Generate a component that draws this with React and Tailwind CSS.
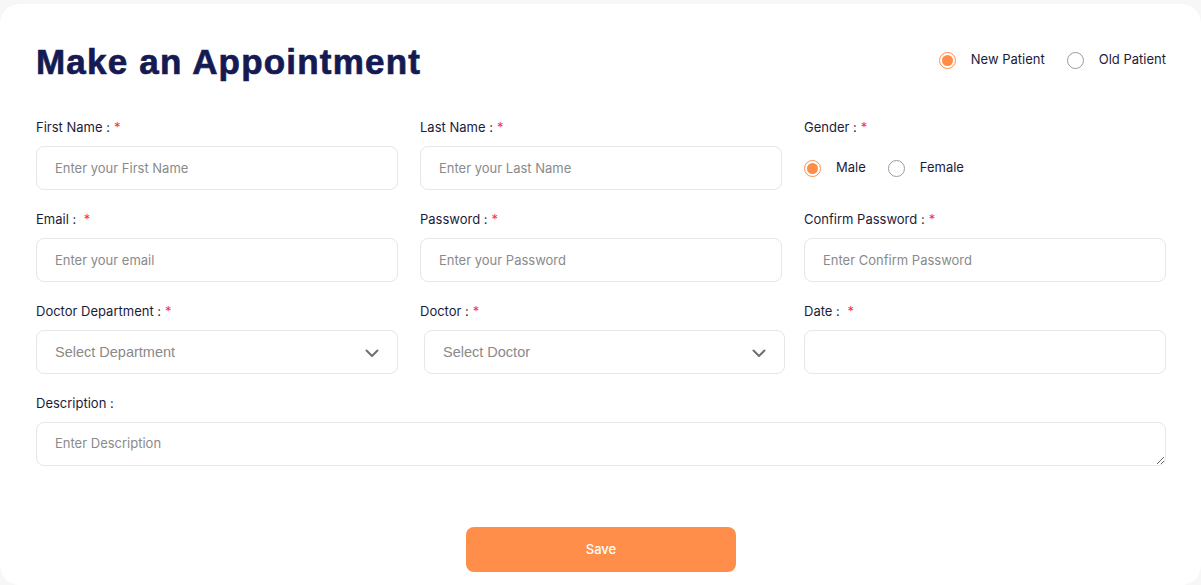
import React, { useState } from 'react';

const Star = () => <span className="text-[#f5334f] ml-1">*</span>;

const Radio = ({ checked, label, onClick }) => (
  <button type="button" onClick={onClick} className="flex items-center gap-[15px]">
    <span
      className={`w-[17px] h-[17px] rounded-full border flex items-center justify-center ${checked ? 'border-[#ff8c47]' : 'border-[#9a9a9a]'}`}
    >
      {checked && <span className="w-[11px] h-[11px] rounded-full bg-[#ff8c47]" />}
    </span>
    <span className="text-[13px] text-[#1c1c3a]">{label}</span>
  </button>
);

const Label = ({ children, star }) => (
  <label className="block h-[20px] leading-[20px] text-[13px] text-[#1c1c3a] mb-[9px]">
    {children}
    {star && <Star />}
  </label>
);

const inputCls =
  'w-full h-[44px] rounded-[8px] border border-[#e6e6e6] bg-white px-[18px] text-[13px] text-[#333] placeholder:text-[#8a8a8a] outline-none';

const Select = ({ placeholder, className = '' }) => (
  <div className={`relative h-[44px] rounded-[8px] border border-[#e6e6e6] bg-white flex items-center pl-[18px] ${className}`}>
    <span className="text-[14.5px] text-[#8a8a8a] font-['Liberation_Sans',Arial,sans-serif] mt-[1px]">{placeholder}</span>
    <svg className="absolute right-[18px] top-[18px]" width="14" height="9" viewBox="0 0 14 9" fill="none">
      <path d="M1.5 1.5L7 7L12.5 1.5" stroke="#6f6f6f" strokeWidth="2" strokeLinecap="round" strokeLinejoin="round" />
    </svg>
  </div>
);

export default function App() {
  const [patient, setPatient] = useState('new');
  const [gender, setGender] = useState('male');

  return (
    <div className="min-h-[585px] bg-[#f7f7f7] pt-[4px] font-['Inter','Noto_Sans',sans-serif]">
      <div className="bg-white rounded-[20px] min-h-[581px] pt-[38px] pl-[36px] pr-[35px]">
        {/* Header */}
        <div className="flex items-center justify-between h-[40px] mb-[35px]">
          <h1 className="text-[35px] leading-[40px] font-bold tracking-[1.2px] text-[#151b52] font-['Liberation_Sans',Arial,sans-serif] [-webkit-text-stroke:0.7px_#151b52]">
            Make an Appointment
          </h1>
          <div className="flex items-center gap-[22px] -mt-[4px]">
            <Radio checked={patient === 'new'} label="New Patient" onClick={() => setPatient('new')} />
            <Radio checked={patient === 'old'} label="Old Patient" onClick={() => setPatient('old')} />
          </div>
        </div>

        {/* Form grid */}
        <div className="grid grid-cols-3 gap-x-[22px] gap-y-[19px]">
          <div>
            <Label star>First Name :</Label>
            <input className={inputCls} placeholder="Enter your First Name" />
          </div>
          <div>
            <Label star>Last Name :</Label>
            <input className={inputCls} placeholder="Enter your Last Name" />
          </div>
          <div>
            <Label star>Gender :</Label>
            <div className="h-[44px] flex items-center gap-[22px]">
              <Radio checked={gender === 'male'} label="Male" onClick={() => setGender('male')} />
              <Radio checked={gender === 'female'} label="Female" onClick={() => setGender('female')} />
            </div>
          </div>

          <div>
            <Label>
              Email : <Star />
            </Label>
            <input className={inputCls} placeholder="Enter your email" />
          </div>
          <div>
            <Label star>Password :</Label>
            <input className={inputCls} type="password" placeholder="Enter your Password" />
          </div>
          <div>
            <Label star>Confirm Password :</Label>
            <input className={inputCls} type="password" placeholder="Enter Confirm Password" />
          </div>

          <div>
            <Label star>Doctor Department :</Label>
            <Select placeholder="Select Department" />
          </div>
          <div>
            <Label star>Doctor :</Label>
            <Select placeholder="Select Doctor" className="ml-[4px] mr-[-3px]" />
          </div>
          <div>
            <Label>
              Date : <Star />
            </Label>
            <input className={inputCls} />
          </div>

          <div className="col-span-3">
            <Label>Description :</Label>
            <textarea
              className={`${inputCls} block pt-[11px] resize-y`}
              placeholder="Enter Description"
            />
          </div>
        </div>

        <div className="flex justify-center mt-[61px]">
          <button className="w-[270px] h-[45px] rounded-[8px] bg-[#ff8e4a] text-white text-[13px] font-medium">
            Save
          </button>
        </div>
      </div>
    </div>
  );
}
